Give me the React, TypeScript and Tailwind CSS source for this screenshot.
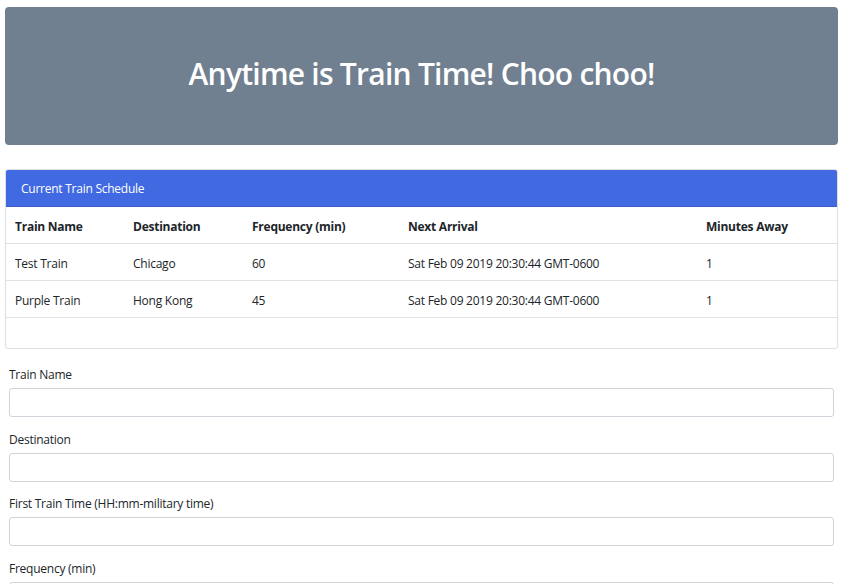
import React from "react";

const rows = [
  { name: "Test Train", dest: "Chicago", freq: "60", next: "Sat Feb 09 2019 20:30:44 GMT-0600", away: "1" },
  { name: "Purple Train", dest: "Hong Kong", freq: "45", next: "Sat Feb 09 2019 20:30:44 GMT-0600", away: "1" },
];

const fields = ["Train Name", "Destination", "First Train Time (HH:mm-military time)", "Frequency (min)"];

export default function App() {
  return (
    <div
      className="w-[863px] h-[584px] overflow-hidden bg-white text-[#212529] pl-[5px] pr-[25px] pt-[7px] tracking-[-0.25px]"
      style={{ fontFamily: '"Open Sans", "Noto Sans", sans-serif' }}
    >
      <div className="bg-[#708090] rounded-[4px] h-[138px] flex items-center justify-center pb-[4px]">
        <h1 className="text-white text-[30px] leading-[36px] font-semibold tracking-[-0.75px]">
          Anytime is Train Time! Choo choo!
        </h1>
      </div>

      <div className="mt-[24px] border border-[#dfdfdf] rounded-[3px] overflow-hidden">
        <div className="bg-[#4169e1] text-white text-[12px] leading-[18px] px-[15px] pt-[10px] pb-[8px] border-b border-[#3b5fc9]">
          Current Train Schedule
        </div>
        <table className="w-full text-[12px] leading-[18px] border-collapse">
          <thead>
            <tr className="border-b border-[#dee2e6]">
              <th className="text-left font-bold px-[9px] pt-[11px] pb-[7px] w-[118px]">Train Name</th>
              <th className="text-left font-bold px-[9px] pt-[11px] pb-[7px] w-[119px]">Destination</th>
              <th className="text-left font-bold px-[9px] pt-[11px] pb-[7px] w-[156px]">Frequency (min)</th>
              <th className="text-left font-bold px-[9px] pt-[11px] pb-[7px] w-[298px]">Next Arrival</th>
              <th className="text-left font-bold px-[9px] pt-[11px] pb-[7px]">Minutes Away</th>
            </tr>
          </thead>
          <tbody>
            {rows.map((r) => (
              <tr key={r.name} className="border-b border-[#dee2e6]">
                <td className="px-[9px] pt-[11px] pb-[7px]">{r.name}</td>
                <td className="px-[9px] pt-[11px] pb-[7px]">{r.dest}</td>
                <td className="px-[9px] pt-[11px] pb-[7px]">{r.freq}</td>
                <td className="px-[9px] pt-[11px] pb-[7px]">{r.next}</td>
                <td className="px-[9px] pt-[11px] pb-[7px]">{r.away}</td>
              </tr>
            ))}
          </tbody>
        </table>
        <div className="h-[30px]" />
      </div>

      <form className="px-[4px] pt-[17px]">
        {fields.map((f) => (
          <div key={f} className="mb-[13.5px]">
            <label className="block text-[12px] leading-[18px] mb-[4px]">{f}</label>
            <input
              type="text"
              className="block w-full h-[29px] border border-[#ced4da] rounded-[3px] bg-white px-[9px] text-[12px] outline-none"
            />
          </div>
        ))}
      </form>
    </div>
  );
}
